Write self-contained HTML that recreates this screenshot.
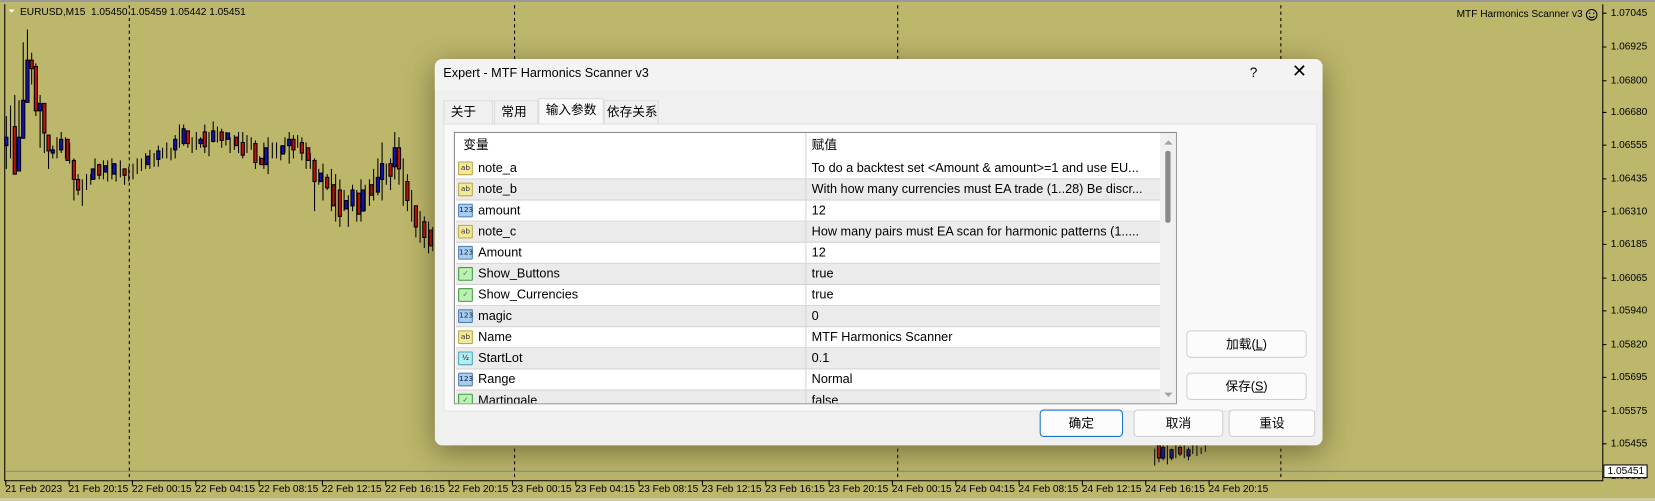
<!DOCTYPE html>
<html><head><meta charset="utf-8"><style>
*{margin:0;padding:0;box-sizing:border-box}
body{width:1655px;height:501px;overflow:hidden;background:#bdb76c;font-family:"Liberation Sans","Noto Sans CJK SC",sans-serif;position:relative}
#w{position:absolute;left:0;top:0;width:1568px;height:475px;transform:scale(1.0555);transform-origin:0 0}
.abs{position:absolute}
.mt{font-family:"Liberation Sans",sans-serif;font-size:9.6px;color:#000;white-space:nowrap}
.dlg{position:absolute;left:412px;top:56px;width:841px;height:366px;background:#f0f0f0;border-radius:7px;box-shadow:0 6px 28px rgba(60,55,20,.55);font-size:12px;color:#000}
.tab{position:absolute;top:39px;height:22px;border:1px solid #dcdcdc;border-bottom:none;background:#f0f0f0;font-size:12px;line-height:20px;padding-left:6px}
.row{position:absolute;left:1px;width:667px;height:20px;border-bottom:1px solid #d4d4d4;font-size:12px;line-height:19px}
.row .n{position:absolute;left:21px}.row .v{position:absolute;left:337px;white-space:nowrap;overflow:hidden;width:330px}
.row .sep{position:absolute;left:331px;top:0;bottom:0;border-left:1px solid #d4d4d4}
.ic{position:absolute;left:2px;top:3px;width:14px;height:13px;border:1px solid;border-radius:1px;font-size:7px;line-height:11px;text-align:center;font-family:"DejaVu Sans",sans-serif}
.ab{background:#f4e89a;border-color:#b8a84a;color:#333}
.n123{background:#a8cdf0;border-color:#4d7fb6;color:#123}
.hf{background:#b8ecf0;border-color:#4aa8b8}
.bo{background:#bdf0b5;border-color:#3c9c3c;color:#2a7a2a}
.btn{position:absolute;background:#fcfcfc;border:1px solid #cfcfcf;border-radius:4px;text-align:center;font-size:12px;line-height:24px}
</style></head><body>
<div class="abs" style="left:0;top:0;width:1655px;height:2px;background:#9a9a9a"></div>
<div class="abs" style="left:0;top:498px;width:1655px;height:3px;background:#d0cca0"></div>
<div id="w">
<svg class="abs" style="left:0;top:0" width="1568" height="475">
<path d="M4.5 4V455.5H1518.5V4" fill="none" stroke="#000"/>
<path d="M122.5 5V452M487.5 5V452M850.5 5V452M1213.5 5V452" stroke="#000" stroke-dasharray="3,3"/>
<line x1="5" y1="446.5" x2="1518" y2="446.5" stroke="#7a8aa0"/>
<g stroke="#000" stroke-width="1">
<path d="M6 110V160M10 100V150M14 90V130M18 95V160M22 40V100M26 28V75M30 50V80M34 60V110M38 90V140M42 110V145M46 135V160M50 138V150M54 130V150M58 125V145M62 130V150M66 135V155M70 150V190M74 165V185M78 170V195M82 165V180M86 165V175M90 150V170M94 155V170M98 152V170M102 152V172M106 150V170M110 155V172M114 152V168M118 160V175M122 158V172M126 155V170M130 150V165M134 150V162M138 145V160M142 142V160M146 145V158M150 138V158M154 140V150M158 135V150M162 140V152M166 128V150M170 118V140M174 118V138M178 125V140M182 130V145M186 125V142M190 130V140M194 118V145M198 125V148M202 115V135M206 120V135M210 122V140M214 125V138M218 130V145M222 128V142M226 125V145M230 125V150M234 128V145M238 130V142M242 133V160M246 148V156M250 135V160M254 130V165M258 135V150M262 135V150M266 138V152M270 130V145M274 125V155M278 128V150M282 128V140M286 130V152M290 135V160M294 145V160M298 150V200M302 160V175M306 155V190M310 165V180M314 160V200M318 165V210M322 170V215M326 180V200M330 185V215M334 175V200M338 180V210M342 170V210M346 175V200M350 170V195M354 160V190M358 150V185M362 135V190M366 155V175M370 150V180M374 125V170M378 130V175M382 150V195M386 165V200M390 180V210M394 195V225M398 200V230M402 205V235M406 210V240M410 215V238"/>
<path d="M1094 425V441M1098 420V438M1102 418V436M1106 422V440M1110 425V436M1114 420V434M1118 418V432M1122 422V434M1126 424V436M1130 420V430M1134 422V432M1138 424V430M1142 420V428"/>
</g>
<g stroke="#000" stroke-width="1">
<rect x="4.5" y="130" width="3" height="8" fill="#1010c0"/><rect x="12.5" y="120" width="3" height="45" fill="#c01010"/><rect x="16.5" y="130" width="3" height="32" fill="#1010c0"/><rect x="20.5" y="95" width="3" height="36" fill="#1010c0"/><rect x="24.5" y="57" width="3" height="40" fill="#1010c0"/><rect x="28.5" y="57" width="3" height="8" fill="#c01010"/><rect x="32.5" y="63" width="3" height="42" fill="#c01010"/><rect x="36.5" y="98" width="3" height="7" fill="#1010c0"/><rect x="40.5" y="98" width="3" height="28" fill="#c01010"/><rect x="44.5" y="128" width="3" height="15" fill="#c01010"/><rect x="48.5" y="142" width="3" height="3" fill="#1010c0"/><rect x="56.5" y="132" width="3" height="10" fill="#1010c0"/><rect x="62.5" y="132" width="3" height="20" fill="#c01010"/><rect x="68.5" y="152" width="3" height="18" fill="#c01010"/><rect x="72.5" y="170" width="3" height="10" fill="#c01010"/><rect x="86.5" y="160" width="3" height="10" fill="#1010c0"/><rect x="92.5" y="156" width="3" height="10" fill="#c01010"/><rect x="98.5" y="157" width="3" height="6" fill="#1010c0"/><rect x="106.5" y="155" width="3" height="10" fill="#1010c0"/><rect x="116.5" y="160" width="3" height="6" fill="#c01010"/><rect x="138.5" y="148" width="3" height="8" fill="#1010c0"/><rect x="148.5" y="143" width="3" height="8" fill="#1010c0"/><rect x="164.5" y="132" width="3" height="10" fill="#1010c0"/><rect x="172.5" y="122" width="3" height="14" fill="#1010c0"/><rect x="176.5" y="124" width="3" height="12" fill="#c01010"/><rect x="188.5" y="132" width="3" height="4" fill="#1010c0"/><rect x="192.5" y="125" width="3" height="14" fill="#c01010"/><rect x="200.5" y="124" width="3" height="10" fill="#1010c0"/><rect x="208.5" y="125" width="3" height="8" fill="#c01010"/><rect x="214.5" y="126" width="3" height="6" fill="#1010c0"/><rect x="222.5" y="130" width="3" height="8" fill="#c01010"/><rect x="228.5" y="135" width="3" height="12" fill="#c01010"/><rect x="240.5" y="136" width="3" height="18" fill="#c01010"/><rect x="246.5" y="150" width="3" height="6" fill="#c01010"/><rect x="250.5" y="140" width="3" height="16" fill="#1010c0"/><rect x="266.5" y="138" width="3" height="8" fill="#1010c0"/><rect x="272.5" y="132" width="3" height="6" fill="#1010c0"/><rect x="276.5" y="132" width="3" height="10" fill="#c01010"/><rect x="284.5" y="135" width="3" height="10" fill="#c01010"/><rect x="290.5" y="140" width="3" height="12" fill="#c01010"/><rect x="296.5" y="152" width="3" height="20" fill="#c01010"/><rect x="302.5" y="164" width="3" height="8" fill="#1010c0"/><rect x="308.5" y="168" width="3" height="10" fill="#c01010"/><rect x="314.5" y="175" width="3" height="20" fill="#c01010"/><rect x="320.5" y="180" width="3" height="25" fill="#c01010"/><rect x="326.5" y="190" width="3" height="8" fill="#1010c0"/><rect x="332.5" y="180" width="3" height="15" fill="#1010c0"/><rect x="338.5" y="183" width="3" height="20" fill="#c01010"/><rect x="342.5" y="180" width="3" height="20" fill="#1010c0"/><rect x="350.5" y="175" width="3" height="10" fill="#c01010"/><rect x="356.5" y="168" width="3" height="14" fill="#1010c0"/><rect x="360.5" y="155" width="3" height="15" fill="#1010c0"/><rect x="368.5" y="155" width="3" height="12" fill="#c01010"/><rect x="372.5" y="140" width="3" height="18" fill="#1010c0"/><rect x="376.5" y="140" width="3" height="20" fill="#c01010"/><rect x="384.5" y="172" width="3" height="18" fill="#c01010"/><rect x="392.5" y="195" width="3" height="20" fill="#c01010"/><rect x="400.5" y="210" width="3" height="15" fill="#c01010"/><rect x="406.5" y="218" width="3" height="15" fill="#c01010"/>
<rect x="1096.5" y="422" width="3" height="12" fill="#c01010"/><rect x="1100.5" y="424" width="3" height="10" fill="#1010c0"/><rect x="1108.5" y="426" width="3" height="8" fill="#1010c0"/><rect x="1116.5" y="424" width="3" height="6" fill="#c01010"/><rect x="1124.5" y="426" width="3" height="6" fill="#1010c0"/>
</g>
<g stroke="#000"><path d="M1518 12.5h4M1518 44.5h4M1518 76.5h4M1518 106.5h4M1518 137.5h4M1518 169.5h4M1518 200.5h4M1518 231.5h4M1518 263.5h4M1518 294.5h4M1518 326.5h4M1518 357.5h4M1518 389.5h4M1518 420.5h4M1518 451.5h4"/>
<path d="M5.5 455v5M65.5 455v5M125.5 455v5M185.5 455v5M245.5 455v5M305.5 455v5M365.5 455v5M425.5 455v5M485.5 455v5M545.5 455v5M605.5 455v5M665.5 455v5M725.5 455v5M785.5 455v5M845.5 455v5M905.5 455v5M965.5 455v5M1025.5 455v5M1085.5 455v5M1145.5 455v5"/></g>
<path d="M8 9h6l-3 3z" fill="#fff"/>
<circle cx="1508" cy="14" r="5" fill="none" stroke="#000"/><circle cx="1506" cy="12.5" r=".7"/><circle cx="1510" cy="12.5" r=".7"/><path d="M1505.5 15.5q2.5 2.5 5 0" fill="none" stroke="#000"/>
</svg>
<div class="abs mt" style="left:19px;top:6px">EURUSD,M15&nbsp; 1.05450 1.05459 1.05442 1.05451</div>
<div class="abs mt" style="left:1380px;top:8px">MTF Harmonics Scanner v3</div>
<div class="abs mt" style="left:1526px;top:7px">1.07045</div>
<div class="abs mt" style="left:1526px;top:39px">1.06925</div>
<div class="abs mt" style="left:1526px;top:71px">1.06800</div>
<div class="abs mt" style="left:1526px;top:101px">1.06680</div>
<div class="abs mt" style="left:1526px;top:132px">1.06555</div>
<div class="abs mt" style="left:1526px;top:164px">1.06435</div>
<div class="abs mt" style="left:1526px;top:195px">1.06310</div>
<div class="abs mt" style="left:1526px;top:226px">1.06185</div>
<div class="abs mt" style="left:1526px;top:258px">1.06065</div>
<div class="abs mt" style="left:1526px;top:289px">1.05940</div>
<div class="abs mt" style="left:1526px;top:321px">1.05820</div>
<div class="abs mt" style="left:1526px;top:352px">1.05695</div>
<div class="abs mt" style="left:1526px;top:384px">1.05575</div>
<div class="abs mt" style="left:1526px;top:415px">1.05455</div>
<div class="abs mt" style="left:1526px;top:446px">1.05330</div>
<div class="abs mt" style="left:1519px;top:440px;width:42px;height:13px;background:#fff;border:1px solid #000;padding-left:3px;line-height:11px">1.05451</div>
<div class="abs mt" style="left:5px;top:458px">21 Feb 2023</div>
<div class="abs mt" style="left:65px;top:458px">21 Feb 20:15</div>
<div class="abs mt" style="left:125px;top:458px">22 Feb 00:15</div>
<div class="abs mt" style="left:185px;top:458px">22 Feb 04:15</div>
<div class="abs mt" style="left:245px;top:458px">22 Feb 08:15</div>
<div class="abs mt" style="left:305px;top:458px">22 Feb 12:15</div>
<div class="abs mt" style="left:365px;top:458px">22 Feb 16:15</div>
<div class="abs mt" style="left:425px;top:458px">22 Feb 20:15</div>
<div class="abs mt" style="left:485px;top:458px">23 Feb 00:15</div>
<div class="abs mt" style="left:545px;top:458px">23 Feb 04:15</div>
<div class="abs mt" style="left:605px;top:458px">23 Feb 08:15</div>
<div class="abs mt" style="left:665px;top:458px">23 Feb 12:15</div>
<div class="abs mt" style="left:725px;top:458px">23 Feb 16:15</div>
<div class="abs mt" style="left:785px;top:458px">23 Feb 20:15</div>
<div class="abs mt" style="left:845px;top:458px">24 Feb 00:15</div>
<div class="abs mt" style="left:905px;top:458px">24 Feb 04:15</div>
<div class="abs mt" style="left:965px;top:458px">24 Feb 08:15</div>
<div class="abs mt" style="left:1025px;top:458px">24 Feb 12:15</div>
<div class="abs mt" style="left:1085px;top:458px">24 Feb 16:15</div>
<div class="abs mt" style="left:1145px;top:458px">24 Feb 20:15</div>

<div class="dlg">
 <div class="abs" style="left:0;top:0;width:841px;height:30px;background:#f3f3f3;border-radius:7px 7px 0 0"></div>
 <div class="abs" style="left:8px;top:6px;font-size:12px">Expert - MTF Harmonics Scanner v3</div>
 <div class="abs" style="left:772px;top:5px;font-size:13px">?</div>
 <div class="abs" style="left:812px;top:2px;font-size:17px;font-family:'DejaVu Sans',sans-serif;font-weight:300">✕</div>
 <div class="tab" style="left:8px;width:47px">关于</div>
 <div class="tab" style="left:56px;width:42px">常用</div>
 <div class="tab" style="left:98px;top:37px;height:25px;width:62px;background:#f9f9f9;line-height:20px">输入参数</div>
 <div class="tab" style="left:160px;width:52px;padding-left:2px">依存关系</div>
 <div class="abs" style="left:8px;top:61px;width:828px;height:273px;background:#f9f9f9;border:1px solid #e2e2e2"></div>
 <div class="abs" style="left:18px;top:69px;width:685px;height:258px;background:#fff;border:1px solid #8a8a8a;overflow:hidden">
  <div class="row" style="top:0;height:24px;line-height:23px;border-bottom:none"><span class="n" style="left:7px">变量</span><span class="sep"></span><span class="v" style="left:337px">赋值</span></div>
  <div class="row" style="top:24px"><span class="ic ab">ab</span><span class="n">note_a</span><span class="sep"></span><span class="v">To do a backtest set &lt;Amount &amp; amount&gt;=1 and use EU...</span></div>
  <div class="row" style="top:44px;background:#ebebeb"><span class="ic ab">ab</span><span class="n">note_b</span><span class="sep"></span><span class="v">With how many currencies must EA trade (1..28) Be discr...</span></div>
  <div class="row" style="top:64px"><span class="ic n123">123</span><span class="n">amount</span><span class="sep"></span><span class="v">12</span></div>
  <div class="row" style="top:84px;background:#ebebeb"><span class="ic ab">ab</span><span class="n">note_c</span><span class="sep"></span><span class="v">How many pairs must EA scan for harmonic patterns (1.....</span></div>
  <div class="row" style="top:104px"><span class="ic n123">123</span><span class="n">Amount</span><span class="sep"></span><span class="v">12</span></div>
  <div class="row" style="top:124px;background:#ebebeb"><span class="ic bo">✓</span><span class="n">Show_Buttons</span><span class="sep"></span><span class="v">true</span></div>
  <div class="row" style="top:144px"><span class="ic bo">✓</span><span class="n">Show_Currencies</span><span class="sep"></span><span class="v">true</span></div>
  <div class="row" style="top:164px;background:#ebebeb"><span class="ic n123">123</span><span class="n">magic</span><span class="sep"></span><span class="v">0</span></div>
  <div class="row" style="top:184px"><span class="ic ab">ab</span><span class="n">Name</span><span class="sep"></span><span class="v">MTF Harmonics Scanner</span></div>
  <div class="row" style="top:204px;background:#ebebeb"><span class="ic hf">½</span><span class="n">StartLot</span><span class="sep"></span><span class="v">0.1</span></div>
  <div class="row" style="top:224px"><span class="ic n123">123</span><span class="n">Range</span><span class="sep"></span><span class="v">Normal</span></div>
  <div class="row" style="top:244px;background:#ebebeb"><span class="ic bo">✓</span><span class="n">Martingale</span><span class="sep"></span><span class="v">false</span></div>
  <div class="abs" style="left:668px;top:0;width:16px;height:258px;background:#f0f0f0"></div>
  <div class="abs" style="left:673px;top:17px;width:5px;height:68px;background:#8a8a8a;border-radius:2px"></div>
  <svg class="abs" style="left:670px;top:5px" width="12" height="250"><path d="M2 6L6 2L10 6Z M2 241L6 245L10 241Z" fill="#a0a0a0"/></svg>
 </div>
 <div class="btn" style="left:712px;top:257px;width:114px;height:26px">加载(<u>L</u>)</div>
 <div class="btn" style="left:712px;top:297px;width:114px;height:26px">保存(<u>S</u>)</div>
 <div class="btn" style="left:573px;top:332px;width:79px;height:26px;border:1px solid #1a73c8">确定</div>
 <div class="btn" style="left:662px;top:332px;width:85px;height:26px">取消</div>
 <div class="btn" style="left:752px;top:332px;width:82px;height:26px">重设</div>
</div>
</div>
</body></html>
